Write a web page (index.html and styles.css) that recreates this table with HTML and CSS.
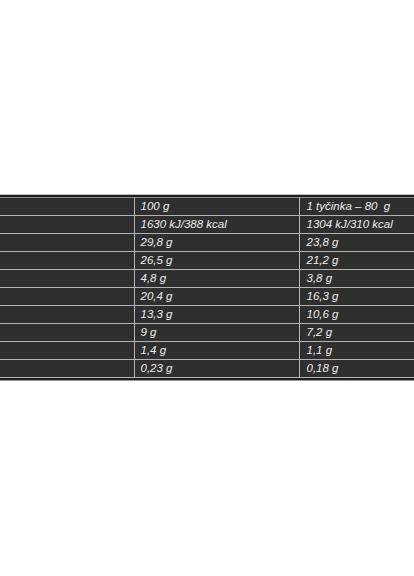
FILE: index.html
```html
<!DOCTYPE html>
<html>
<head>
<meta charset="utf-8">
<link rel="stylesheet" href="styles.css">
</head>
<body>
<div class="page">
  <div class="wrap">
    <table class="nutri">
      <tr><td class="c1"></td><td class="c2">100 g</td><td class="c3">1 tyčinka – 80&nbsp; g</td></tr>
      <tr><td class="c1"></td><td class="c2">1630 kJ/388 kcal</td><td class="c3">1304 kJ/310 kcal</td></tr>
      <tr><td class="c1"></td><td class="c2">29,8 g</td><td class="c3">23,8 g</td></tr>
      <tr><td class="c1"></td><td class="c2">26,5 g</td><td class="c3">21,2 g</td></tr>
      <tr><td class="c1"></td><td class="c2">4,8 g</td><td class="c3">3,8 g</td></tr>
      <tr><td class="c1"></td><td class="c2">20,4 g</td><td class="c3">16,3 g</td></tr>
      <tr><td class="c1"></td><td class="c2">13,3 g</td><td class="c3">10,6 g</td></tr>
      <tr><td class="c1"></td><td class="c2">9 g</td><td class="c3">7,2 g</td></tr>
      <tr><td class="c1"></td><td class="c2">1,4 g</td><td class="c3">1,1 g</td></tr>
      <tr><td class="c1"></td><td class="c2">0,23 g</td><td class="c3">0,18 g</td></tr>
    </table>
  </div>
</div>
</body>
</html>
```
FILE: styles.css
```css
html, body {
  margin: 0;
  padding: 0;
  background: #ffffff;
  overflow: hidden;
}
.page {
  width: 414px;
  height: 576px;
  padding-top: 195px;
  box-sizing: border-box;
}
.wrap {
  border-top: 2px solid #1e1e1e;
  border-bottom: 2px solid #1e1e1e;
  box-shadow: 0 1px 0 #9a9a9a, 0 -1px 0 #bdbdbd;
  background: #2f2f2f;
}
.nutri {
  width: 100%;
  border-collapse: collapse;
  table-layout: fixed;
  font-family: "Liberation Sans", Arial, sans-serif;
  font-style: italic;
  font-size: 11.5px;
  color: #ececec;
}
.nutri td {
  height: 17px;
  padding: 0 0 0 6px;
  border: 1px solid #b3b3b3;
  background: #2f2f2f;
  white-space: nowrap;
  overflow: hidden;
  line-height: 17px;
  box-sizing: border-box;
}
.nutri tr:first-child td { border-top-color: #8a8a8a; }
.nutri td.c1 { width: 134px; border-left: none; }
.nutri td.c2 { width: 165px; }
.nutri td.c3 { border-right: none; padding-left: 7px; }
```
